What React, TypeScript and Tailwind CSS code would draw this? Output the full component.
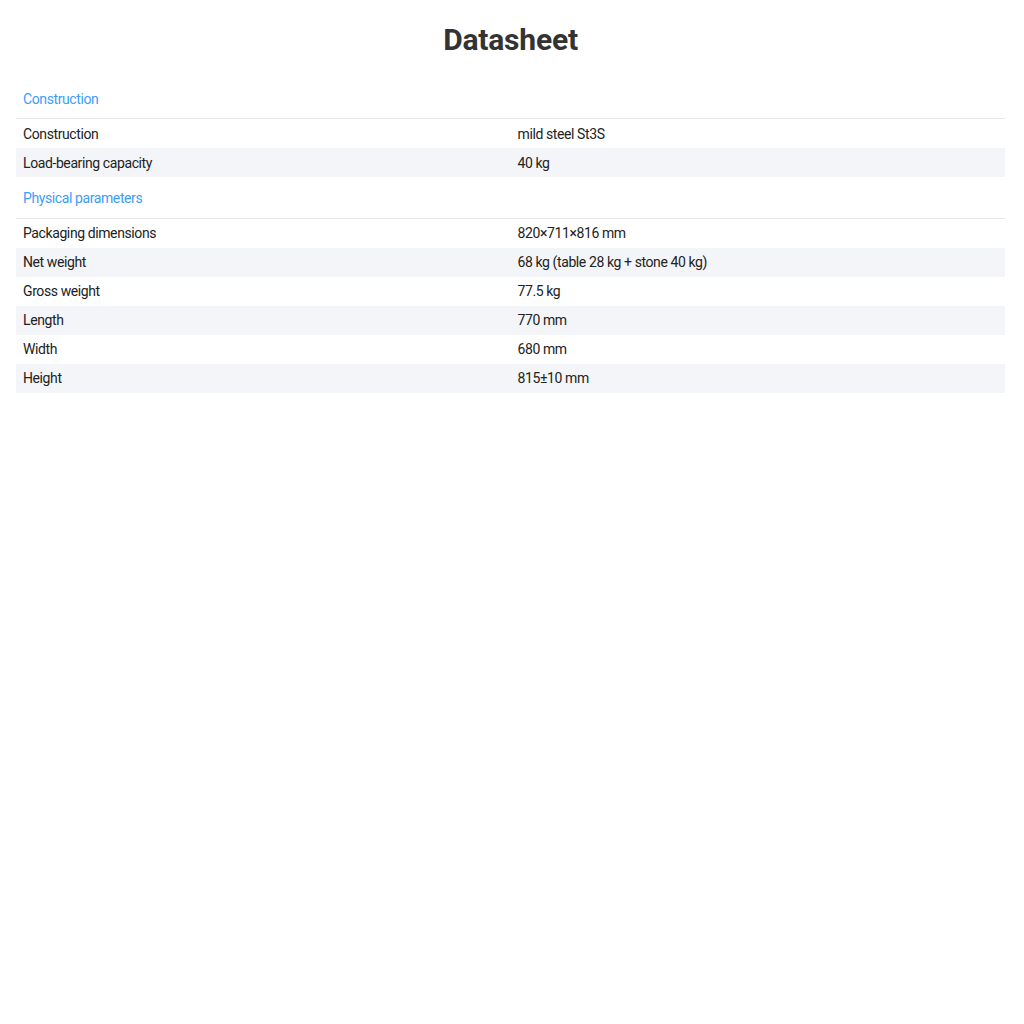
import React from "react";

type Row = [string, string];
const sections: { title: string; rows: Row[] }[] = [
  {
    title: "Construction",
    rows: [
      ["Construction", "mild steel St3S"],
      ["Load-bearing capacity", "40 kg"],
    ],
  },
  {
    title: "Physical parameters",
    rows: [
      ["Packaging dimensions", "820×711×816 mm"],
      ["Net weight", "68 kg (table 28 kg + stone 40 kg)"],
      ["Gross weight", "77.5 kg"],
      ["Length", "770 mm"],
      ["Width", "680 mm"],
      ["Height", "815±10 mm"],
    ],
  },
];

export default function App() {
  return (
    <div
      className="min-h-[1024px] bg-white pt-[20px]"
      style={{ fontFamily: "Roboto, 'Liberation Sans', sans-serif" }}
    >
      <div className="ml-4 w-[989px]">
        <h1 className="text-center text-[30px] font-bold leading-[40px] tracking-[-0.2px] text-[#333333]">
          Datasheet
        </h1>
        <div className="mt-[18px]">
          {sections.map((s) => (
            <div key={s.title}>
              <div className="border-b border-[#e8e9ec] px-[7px] pt-[13px] pb-[10.7px] text-[14px] leading-[16.8px] tracking-[-0.4px] text-[#3d9dfc]">
                {s.title}
              </div>
              {s.rows.map(([k, v], i) => (
                <div
                  key={k}
                  className={`grid grid-cols-2 text-[14px] leading-[16.8px] tracking-[-0.4px] text-[#222222] ${
                    i % 2 === 1 ? "bg-[#f4f5f8]" : "bg-white"
                  }`}
                >
                  <div className="px-[7px] pt-[6.5px] pb-[5.7px]">{k}</div>
                  <div className="px-[7px] pt-[6.5px] pb-[5.7px]">{v}</div>
                </div>
              ))}
            </div>
          ))}
        </div>
      </div>
    </div>
  );
}
